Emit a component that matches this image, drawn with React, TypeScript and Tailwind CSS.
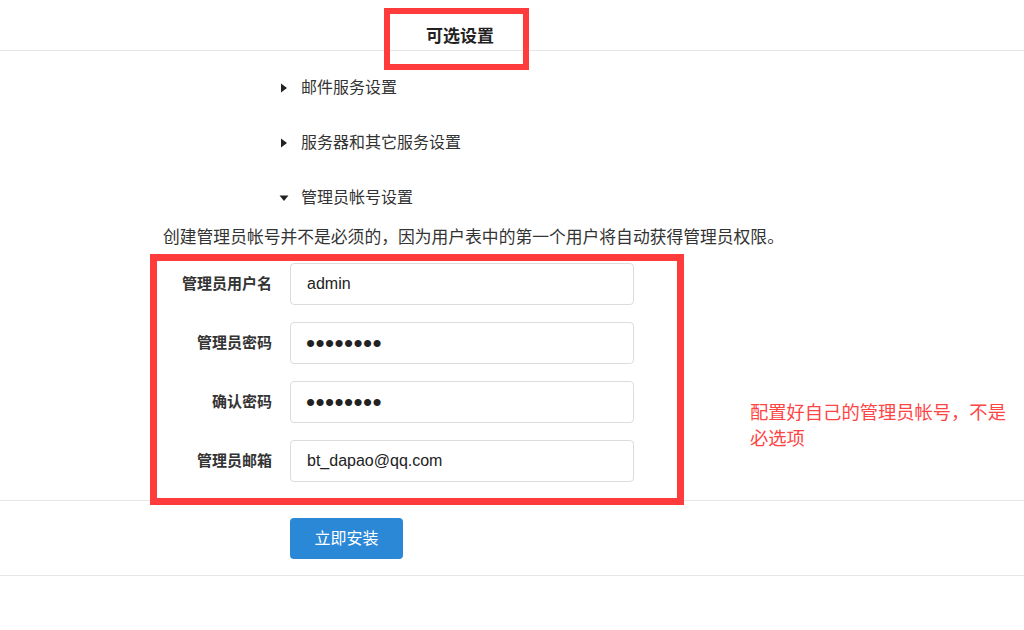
import React from "react";

const font = { fontFamily: '"Liberation Sans", "Noto Sans CJK SC", sans-serif' };

function Caret({ open }: { open: boolean }) {
  return open ? (
    <svg width="10" height="10" viewBox="0 0 10 10" className="shrink-0">
      <path d="M0.5 2.5 L9.5 2.5 L5 8 Z" fill="#222" />
    </svg>
  ) : (
    <svg width="10" height="10" viewBox="0 0 10 10" className="shrink-0">
      <path d="M2 0.5 L8 5 L2 9.5 Z" fill="#222" />
    </svg>
  );
}

const sections = [
  { title: "邮件服务设置", open: false },
  { title: "服务器和其它服务设置", open: false },
  { title: "管理员帐号设置", open: true },
];

const fields = [
  { label: "管理员用户名", value: "admin", secret: false },
  { label: "管理员密码", value: "12345678", secret: true },
  { label: "确认密码", value: "12345678", secret: true },
  { label: "管理员邮箱", value: "bt_dapao@qq.com", secret: false },
];

export default function App() {
  return (
    <div className="relative w-[1024px] h-[630px] overflow-hidden bg-white text-[#333]" style={font}>
      {/* heading */}
      <div className="h-[51px] border-b border-[#e6e6e6] flex items-end pb-[2px]">
        <h2 className="ml-[426px] text-[17px] font-bold leading-[22px] text-[#222]">可选设置</h2>
      </div>

      {/* collapsible groups */}
      <div className="pt-[9px] pl-[279px]">
        {sections.map((s) => (
          <div key={s.title} className="h-[55px] flex items-center gap-[12px]">
            <Caret open={s.open} />
            <span className="text-[16px] text-[#333]">{s.title}</span>
          </div>
        ))}
      </div>

      <p className="pl-[163px] text-[16.8px] leading-[26px] text-[#333]">
        创建管理员帐号并不是必须的，因为用户表中的第一个用户将自动获得管理员权限。
      </p>

      {/* admin account form */}
      <div className="mt-[12px] pb-[18px] border-b border-[#e6e6e6] flex flex-col gap-[17px]">
        {fields.map((f) => (
          <div key={f.label} className="flex items-center">
            <label className="w-[272px] text-right text-[15px] font-bold text-[#333]">{f.label}</label>
            <input
              readOnly
              type={f.secret ? "password" : "text"}
              value={f.value}
              className={
                f.secret
                  ? "ml-[18px] w-[344px] h-[42px] rounded-[4px] border border-[#dcdcdc] bg-white px-[15px] text-[26px] tracking-[0.4px] text-[#222] outline-none"
                  : "ml-[18px] w-[344px] h-[42px] rounded-[4px] border border-[#dcdcdc] bg-white px-[16px] text-[16px] text-[#222] outline-none"
              }
              style={font}
            />
          </div>
        ))}
      </div>

      <div className="pt-[17px] pb-[16px] pl-[290px] border-b border-[#e6e6e6]">
        <button className="w-[113px] h-[41px] rounded-[4px] bg-[#2a88d6] text-white text-[16px]">立即安装</button>
      </div>

      {/* annotation overlays */}
      <div className="absolute left-[384px] top-[8px] w-[145px] h-[62px] border-[6px] border-[#ff3b3b]" />
      <div className="absolute left-[150px] top-[254px] w-[534px] h-[251px] border-[7px] border-[#ff3b3b]" />
      <div className="absolute left-[750px] top-[400px] w-[268px] text-[18.3px] leading-[26px] text-[#ff4444]">
        配置好自己的管理员帐号，不是必选项
      </div>
    </div>
  );
}
